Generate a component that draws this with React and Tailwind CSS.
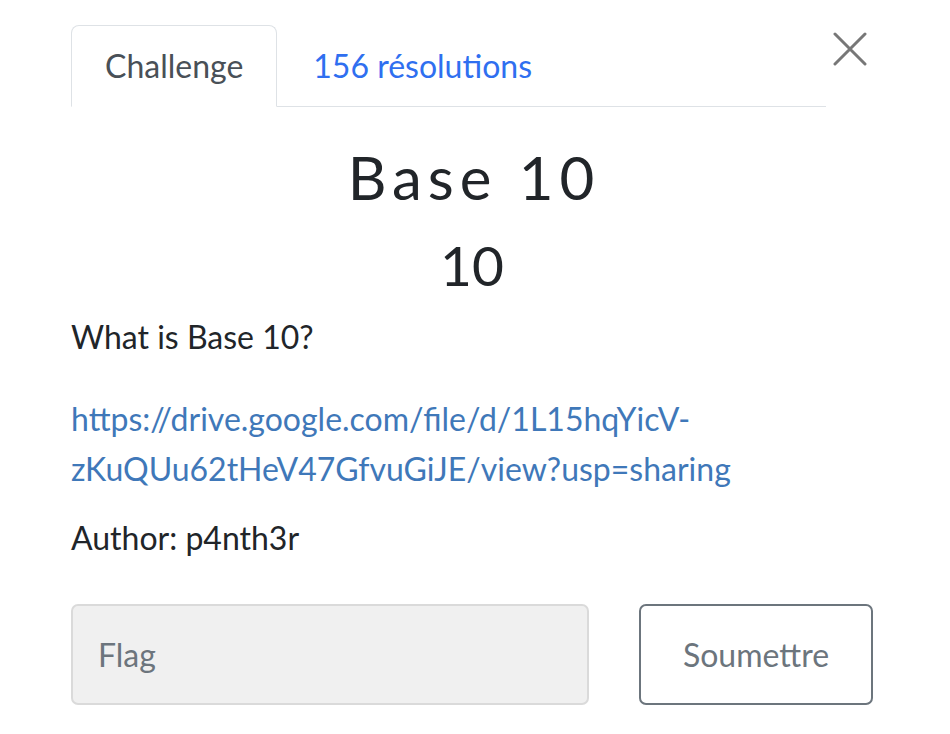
import React from 'react';

export default function App() {
  return (
    <div className="min-h-screen bg-white font-['Lato','Noto_Sans',sans-serif] text-[#212529]">
      <div className="w-[802px] ml-[71px] pt-[25px]">
        <div className="flex">
          <div className="flex-1 flex border-b border-[#dee2e6]">
            <div className="h-[82px] -mb-px px-[33px] flex items-center border border-[#dee2e6] border-b-white rounded-t-[8px] bg-white text-[32px] text-[#495057]">
              Challenge
            </div>
            <div className="h-[81px] px-[36px] flex items-center text-[32px] text-[#2f6ff0]">
              156 résolutions
            </div>
          </div>
          <div className="w-[47px] flex justify-end pt-[7px]">
            <svg width="34" height="34" viewBox="0 0 34 34" className="mr-[6px]">
              <path d="M2 2 L32 32 M32 2 L2 32" stroke="#777777" strokeWidth="3" strokeLinecap="round" />
            </svg>
          </div>
        </div>

        <h2 className="mt-[34px] pl-[4px] text-center text-[60px] leading-[1.2] tracking-[6px] font-normal">
          Base 10
        </h2>
        <h3 className="mt-[19px] text-center text-[55px] leading-[1.2] font-normal">
          10
        </h3>

        <p className="mt-[14px] text-[32px] leading-[50px]">What is Base 10?</p>
        <p className="mt-[32px] text-[32px] leading-[50px] text-[#3f78b9] w-[720px]">
          https://drive.google.com/file/d/1L15hqYicV-zKuQUu62tHeV47GfvuGiJE/view?usp=sharing
        </p>
        <p className="mt-[19px] text-[32px] leading-[50px]">Author: p4nth3r</p>

        <div className="mt-[41px] flex gap-[50px]">
          <div className="w-[518px] h-[101px] rounded-[7px] border-2 border-[#dadada] bg-[#f0f0f0] flex items-center pl-[25px] text-[32px] text-[#6c757d]">
            Flag
          </div>
          <div className="w-[234px] h-[101px] rounded-[7px] border-2 border-[#6c757d] bg-white flex items-center justify-center text-[32px] text-[#6c757d]">
            Soumettre
          </div>
        </div>
      </div>
    </div>
  );
}
